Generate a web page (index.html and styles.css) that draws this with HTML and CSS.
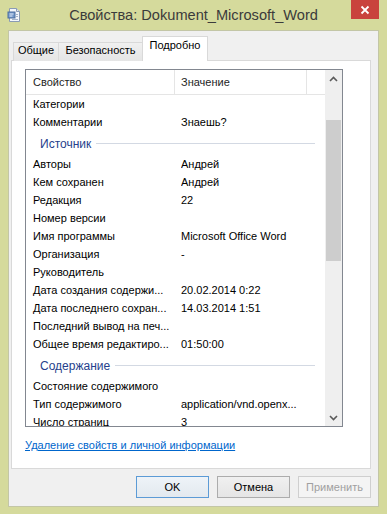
FILE: index.html
```html
<!DOCTYPE html>
<html lang="ru">
<head>
<meta charset="utf-8">
<title>Свойства</title>
<link rel="stylesheet" href="styles.css">
</head>
<body>
<div class="window">
  <div class="titlebar">
    <div class="tb-left">
      <svg class="app-icon" width="15" height="16" viewBox="0 0 15 16">
        <path d="M2.5 1.5h7l3 3v10h-10z" fill="#f4f7fb" stroke="#8a9bb4"/>
        <path d="M9.5 1.5v3h3" fill="#dfe6f0" stroke="#8a9bb4"/>
        <rect x="1" y="5" width="7" height="6" fill="#6f95c8" stroke="#4c6f9f"/>
        <rect x="2.5" y="6.5" width="4" height="1" fill="#e8f0fa"/>
        <rect x="2.5" y="8.5" width="3" height="1" fill="#e8f0fa"/>
        <path d="M9 7.5h2M9 9.5h2M5 12.5h6" stroke="#a6b4c8"/>
      </svg>
    </div>
    <div class="title">Свойства: Dokument_Microsoft_Word</div>
    <div class="tb-right">
      <div class="close">
        <svg width="10" height="10" viewBox="0 0 10 10"><path d="M1.5 1.5l7 7M8.5 1.5l-7 7" stroke="#fff" stroke-width="1.8"/></svg>
      </div>
    </div>
  </div>

  <div class="client">
    <div class="tabs">
      <div class="tab first">Общие</div>
      <div class="tab mid">Безопасность</div>
      <div class="tab active">Подробно</div>
    </div>

    <div class="panel">
      <div class="list">
        <div class="list-body">
          <div class="list-header">
            <div class="hcell hname">Свойство</div>
            <div class="hcell hvalue">Значение</div>
            <div class="hcell hrest"></div>
          </div>
          <div class="row"><div class="name">Категории</div><div class="value"></div></div>
          <div class="row"><div class="name">Комментарии</div><div class="value">Знаешь?</div></div>
          <div class="group"><span class="group-title">Источник</span><span class="group-line"></span></div>
          <div class="row"><div class="name">Авторы</div><div class="value">Андрей</div></div>
          <div class="row"><div class="name">Кем сохранен</div><div class="value">Андрей</div></div>
          <div class="row"><div class="name">Редакция</div><div class="value">22</div></div>
          <div class="row"><div class="name">Номер версии</div><div class="value"></div></div>
          <div class="row"><div class="name">Имя программы</div><div class="value">Microsoft Office Word</div></div>
          <div class="row"><div class="name">Организация</div><div class="value">-</div></div>
          <div class="row"><div class="name">Руководитель</div><div class="value"></div></div>
          <div class="row"><div class="name">Дата создания содержи...</div><div class="value">20.02.2014 0:22</div></div>
          <div class="row"><div class="name">Дата последнего сохран...</div><div class="value">14.03.2014 1:51</div></div>
          <div class="row"><div class="name">Последний вывод на печ...</div><div class="value"></div></div>
          <div class="row"><div class="name">Общее время редактиро...</div><div class="value">01:50:00</div></div>
          <div class="group"><span class="group-title">Содержание</span><span class="group-line"></span></div>
          <div class="row"><div class="name">Состояние содержимого</div><div class="value"></div></div>
          <div class="row"><div class="name">Тип содержимого</div><div class="value">application/vnd.openx...</div></div>
          <div class="row"><div class="name">Число страниц</div><div class="value">3</div></div>
        </div>
        <div class="scrollbar">
          <div class="sb-btn up">
            <svg width="9" height="6" viewBox="0 0 9 6"><path d="M1 5L4.5 1.5L8 5" fill="none" stroke="#5a5a5a" stroke-width="1.6"/></svg>
          </div>
          <div class="sb-track"><div class="sb-thumb"></div></div>
          <div class="sb-btn down">
            <svg width="9" height="6" viewBox="0 0 9 6"><path d="M1 1L4.5 4.5L8 1" fill="none" stroke="#5a5a5a" stroke-width="1.6"/></svg>
          </div>
        </div>
      </div>
      <a class="link" href="#">Удаление свойств и личной информации</a>
    </div>

    <div class="buttons">
      <div class="btn default">OK</div>
      <div class="btn">Отмена</div>
      <div class="btn disabled">Применить</div>
    </div>
  </div>
</div>
</body>
</html>
```

FILE: styles.css
```css
* { box-sizing: border-box; }

html, body {
  margin: 0;
  padding: 0;
}

body {
  background: #d5da9c;
  font-family: "Liberation Sans", Arial, sans-serif;
  font-size: 11px;
  color: #000;
}

.window {
  width: 387px;
  height: 514px;
  display: flex;
  flex-direction: column;
  background: #d5da9c;
}

/* ---------- title bar ---------- */
.titlebar {
  height: 30px;
  flex: none;
  display: grid;
  grid-template-columns: 1fr auto 1fr;
  align-items: start;
}

.tb-left {
  padding: 7px 0 0 7px;
}

.app-icon { display: block; }

.title {
  font-size: 14.6px;
  line-height: 30px;
  color: #3b3b3b;
  white-space: nowrap;
}

.tb-right {
  display: flex;
  justify-content: flex-end;
  padding-right: 8px;
}

.close {
  width: 28px;
  height: 19px;
  background: #c9433d;
  display: flex;
  align-items: center;
  justify-content: center;
}

.close svg { display: block; }

/* ---------- client area ---------- */
.client {
  flex: 1;
  margin: 0 8px 7px 8px;
  background: #f0f0f0;
  border: 1px solid #c3c6a6;
  padding: 6px 7px 0 2px;
  display: flex;
  flex-direction: column;
}

.tabs {
  display: flex;
  align-items: flex-end;
  height: 24px;
  padding-left: 2px;
  position: relative;
  z-index: 1;
  margin-bottom: -1px;
}

.tab {
  height: 19px;
  line-height: 15px;
  text-align: center;
  background: linear-gradient(#f0f0f0, #e5e5e5);
  border-top: 1px solid #d9d9d9;
  color: #000;
  white-space: nowrap;
}

.tab.first {
  width: 46px;
  border-left: 1px solid #d9d9d9;
  border-right: 1px solid #d9d9d9;
}

.tab.mid {
  width: 83px;
}

.tab.active {
  width: 66px;
  height: 25px;
  padding-top: 1px;
  background: #fff;
  border-left: 1px solid #d9d9d9;
  border-right: 1px solid #d9d9d9;
}

.panel {
  height: 409px;
  flex: none;
  background: #fff;
  border: 1px solid #d9d9d9;
  padding: 8px 0 0 13px;
  display: flex;
  flex-direction: column;
  align-items: flex-start;
}

/* ---------- list view ---------- */
.list {
  width: 318px;
  height: 358px;
  border: 1px solid #828790;
  display: flex;
  background: #fff;
}

.list-body {
  flex: 1;
  height: 356px;
  overflow: hidden;
}

.list-header {
  display: flex;
  height: 25px;
  border-bottom: 1px solid #e5e5e5;
}

.hcell {
  line-height: 24px;
  color: #1e1e1e;
  white-space: nowrap;
}

.hname {
  width: 149px;
  padding-left: 7px;
  border-right: 1px solid #e5e5e5;
}

.hvalue {
  width: 132px;
  padding-left: 6px;
  border-right: 1px solid #e5e5e5;
}

.hrest { flex: 1; }

.row {
  display: grid;
  grid-template-columns: 155px 1fr;
  height: 18px;
  line-height: 18px;
  white-space: nowrap;
}

.name {
  padding-left: 7px;
  overflow: hidden;
}

.value {
  overflow: hidden;
}

.group {
  height: 24px;
  display: flex;
  align-items: center;
  padding: 1px 10px 0 14px;
}

.group-title {
  font-size: 12px;
  color: #263f8c;
  line-height: 16px;
}

.group-line {
  flex: 1;
  height: 1px;
  background: #d3d9e3;
  margin-left: 5px;
}

/* ---------- scrollbar ---------- */
.scrollbar {
  width: 17px;
  flex: none;
  background: #efefef;
  display: flex;
  flex-direction: column;
}

.sb-btn {
  height: 17px;
  display: flex;
  align-items: center;
  justify-content: center;
}

.sb-btn.up { align-items: flex-end; padding-bottom: 5px; }

.sb-btn svg { display: block; }

.sb-track {
  flex: 1;
  padding: 33px 1px 0 1px;
}

.sb-thumb {
  height: 141px;
  background: #cdcdcd;
}

/* ---------- link ---------- */
.link {
  margin-top: 11px;
  line-height: 15px;
  color: #0066cc;
  text-decoration: underline;
}

/* ---------- buttons ---------- */
.buttons {
  display: flex;
  justify-content: flex-end;
  gap: 8px;
  margin-top: 7px;
}

.btn {
  width: 73px;
  height: 22px;
  border: 1px solid #acacac;
  background: linear-gradient(#f0f0f0, #e5e5e5);
  text-align: center;
  line-height: 15px;
  padding-top: 3px;
  color: #000;
}

.btn.default {
  border-color: #5c9bd6;
  background: linear-gradient(#eef3f8, #e3e9ef);
}

.btn.disabled {
  border-color: #cfcfcf;
  background: #f4f4f4;
  color: #a0a0a0;
}
```
